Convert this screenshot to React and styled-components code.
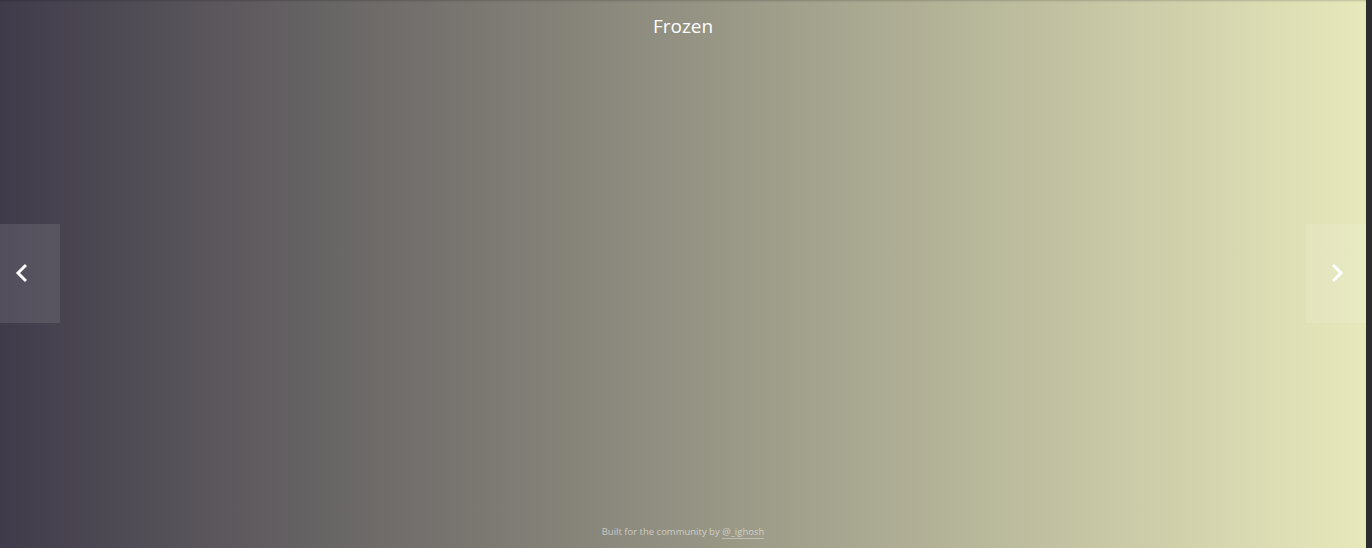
import React, { useState } from 'react';
import styled, { createGlobalStyle } from 'styled-components';

const GlobalStyle = createGlobalStyle`
    html, body, #root {
        margin: 0;
        height: 100%;
    }
    body {
        font-family: "Open Sans", "Noto Sans", sans-serif;
        overflow: hidden;
    }
`

const gradients = [
    { name: 'Frozen', colors: ['#403B4A', '#E7E9BB'] },
];

const Page = styled.div`
    display: flex;
    height: 100vh;
`

const Stage = styled.main`
    flex: 1;
    display: grid;
    grid-template-columns: 60px 1fr 60px;
    grid-template-rows: auto 1fr auto;
    background: linear-gradient(to right, ${p => p.from}, ${p => p.to});
    box-shadow: inset 0 2px 2px -1px rgba(0,0,0,0.18);
    color: #fff;
`

const Title = styled.h1`
    grid-column: 1 / -1;
    margin: 0;
    padding-top: 13px;
    text-align: center;
    font-size: 19px;
    font-weight: 400;
    line-height: 26px;
`

const ArrowButton = styled.button`
    align-self: center;
    width: 60px;
    height: 99px;
    margin-top: -18px;
    border: 0;
    padding: ${p => p.side === 'left' ? '0 17px 0 0' : '0 0 0 2px'};
    display: flex;
    align-items: center;
    justify-content: center;
    background: rgba(255,255,255,0.1);
    color: #fff;
    cursor: pointer;
    grid-column: ${p => p.side === 'left' ? '1' : '3'};
    grid-row: 2;
`

const Footer = styled.footer`
    grid-column: 1 / -1;
    text-align: center;
    font-size: 9.5px;
    padding-bottom: 10px;
    color: rgba(255,255,255,0.55);

    a {
        color: inherit;
        text-decoration: none;
        border-bottom: 1px solid rgba(255,255,255,0.35);
    }
`

const ScrollTrack = styled.div`
    width: 6px;
    background: #2c2c2c;
`

const Chevron = ({ dir }) => (
    <svg width="14" height="20" viewBox="0 0 14 20">
        <path
            d={dir === 'left' ? 'M11 2 L3 10 L11 18' : 'M3 2 L11 10 L3 18'}
            fill="none"
            stroke="#fff"
            strokeWidth="3"
        />
    </svg>
);

const App = () => {
    const [index, setIndex] = useState(0);
    const current = gradients[index];

    const prev = () => setIndex((index - 1 + gradients.length) % gradients.length);
    const next = () => setIndex((index + 1) % gradients.length);

    return (
        <>
            <GlobalStyle />
            <Page>
                <Stage from={current.colors[0]} to={current.colors[1]}>
                    <Title>{current.name}</Title>
                    <ArrowButton side="left" onClick={prev}><Chevron dir="left" /></ArrowButton>
                    <ArrowButton side="right" onClick={next}><Chevron dir="right" /></ArrowButton>
                    <Footer>Built for the community by <a href="#">@_ighosh</a></Footer>
                </Stage>
                <ScrollTrack />
            </Page>
        </>
    );
}

export default App;
